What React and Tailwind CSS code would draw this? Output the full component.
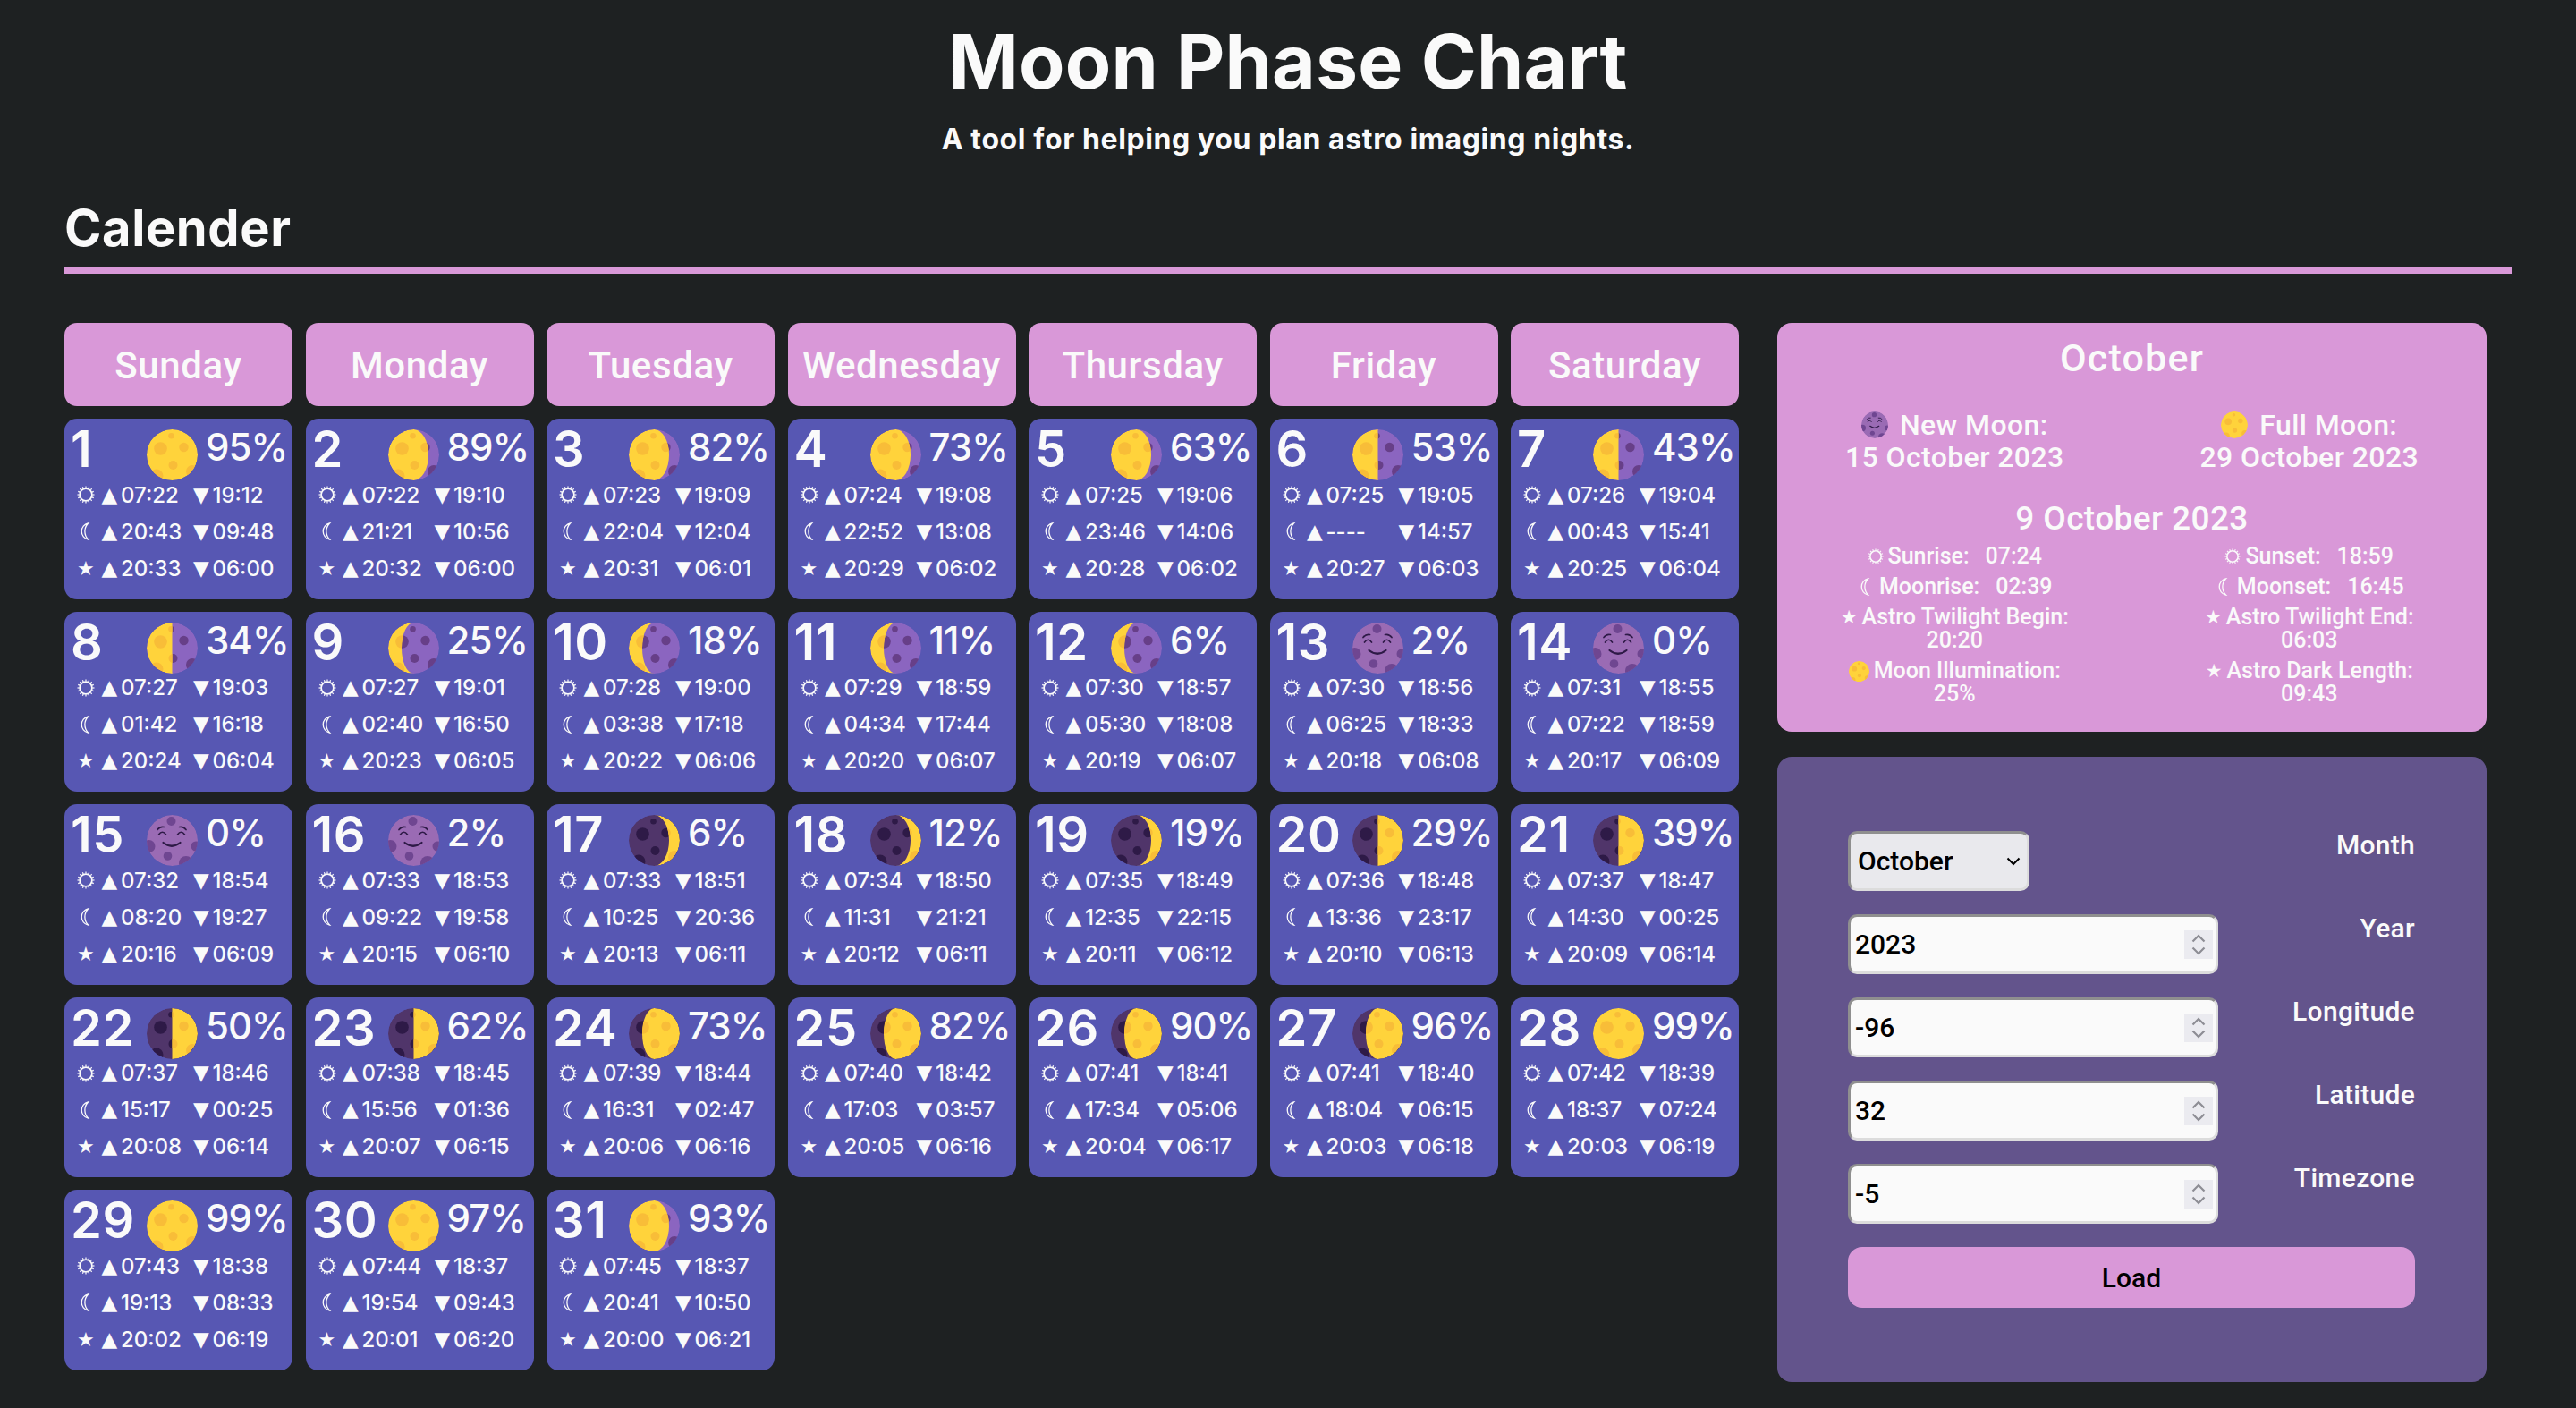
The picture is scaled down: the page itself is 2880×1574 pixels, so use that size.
import { useId } from "react";

const WEEKDAYS = ["Sunday", "Monday", "Tuesday", "Wednesday", "Thursday", "Friday", "Saturday"];

// day, illumination, phase, sun up/down, moon up/down, astro up/down
const DAYS = [
  [1, 95, "full", "07:22", "19:12", "20:43", "09:48", "20:33", "06:00"],
  [2, 89, "waningGibbous", "07:22", "19:10", "21:21", "10:56", "20:32", "06:00"],
  [3, 82, "waningGibbous", "07:23", "19:09", "22:04", "12:04", "20:31", "06:01"],
  [4, 73, "waningGibbous", "07:24", "19:08", "22:52", "13:08", "20:29", "06:02"],
  [5, 63, "waningGibbous", "07:25", "19:06", "23:46", "14:06", "20:28", "06:02"],
  [6, 53, "lastQuarter", "07:25", "19:05", "----", "14:57", "20:27", "06:03"],
  [7, 43, "lastQuarter", "07:26", "19:04", "00:43", "15:41", "20:25", "06:04"],
  [8, 34, "lastQuarter", "07:27", "19:03", "01:42", "16:18", "20:24", "06:04"],
  [9, 25, "waningCrescent", "07:27", "19:01", "02:40", "16:50", "20:23", "06:05"],
  [10, 18, "waningCrescent", "07:28", "19:00", "03:38", "17:18", "20:22", "06:06"],
  [11, 11, "waningCrescent", "07:29", "18:59", "04:34", "17:44", "20:20", "06:07"],
  [12, 6, "waningCrescent", "07:30", "18:57", "05:30", "18:08", "20:19", "06:07"],
  [13, 2, "new", "07:30", "18:56", "06:25", "18:33", "20:18", "06:08"],
  [14, 0, "new", "07:31", "18:55", "07:22", "18:59", "20:17", "06:09"],
  [15, 0, "new", "07:32", "18:54", "08:20", "19:27", "20:16", "06:09"],
  [16, 2, "new", "07:33", "18:53", "09:22", "19:58", "20:15", "06:10"],
  [17, 6, "waxingCrescent", "07:33", "18:51", "10:25", "20:36", "20:13", "06:11"],
  [18, 12, "waxingCrescent", "07:34", "18:50", "11:31", "21:21", "20:12", "06:11"],
  [19, 19, "waxingCrescent", "07:35", "18:49", "12:35", "22:15", "20:11", "06:12"],
  [20, 29, "firstQuarter", "07:36", "18:48", "13:36", "23:17", "20:10", "06:13"],
  [21, 39, "firstQuarter", "07:37", "18:47", "14:30", "00:25", "20:09", "06:14"],
  [22, 50, "firstQuarter", "07:37", "18:46", "15:17", "00:25", "20:08", "06:14"],
  [23, 62, "firstQuarter", "07:38", "18:45", "15:56", "01:36", "20:07", "06:15"],
  [24, 73, "waxingGibbous", "07:39", "18:44", "16:31", "02:47", "20:06", "06:16"],
  [25, 82, "waxingGibbous", "07:40", "18:42", "17:03", "03:57", "20:05", "06:16"],
  [26, 90, "waxingGibbous", "07:41", "18:41", "17:34", "05:06", "20:04", "06:17"],
  [27, 96, "waxingGibbous", "07:41", "18:40", "18:04", "06:15", "20:03", "06:18"],
  [28, 99, "full", "07:42", "18:39", "18:37", "07:24", "20:03", "06:19"],
  [29, 99, "full", "07:43", "18:38", "19:13", "08:33", "20:02", "06:19"],
  [30, 97, "full", "07:44", "18:37", "19:54", "09:43", "20:01", "06:20"],
  [31, 93, "waningGibbous", "07:45", "18:37", "20:41", "10:50", "20:00", "06:21"],
];

const LIT_SHAPES = {
  waningGibbous: "M28.5 0A28.5 28.5 0 0 0 28.5 57A16.5 28.5 0 0 0 28.5 0Z",
  lastQuarter: "M28.5 0A28.5 28.5 0 0 0 28.5 57Z",
  waningCrescent: "M28.5 0A28.5 28.5 0 0 0 28.5 57A13.5 28.5 0 0 1 28.5 0Z",
  waxingCrescent: "M28.5 0A28.5 28.5 0 0 1 28.5 57A16.5 28.5 0 0 0 28.5 0Z",
  firstQuarter: "M28.5 0A28.5 28.5 0 0 1 28.5 57Z",
  waxingGibbous: "M28.5 0A28.5 28.5 0 0 1 28.5 57A13.5 28.5 0 0 1 28.5 0Z",
};

const WANING = ["waningGibbous", "lastQuarter", "waningCrescent"];

function Craters({ fill }) {
  return (
    <g fill={fill}>
      <circle cx="27.5" cy="7.3" r="3.3" />
      <circle cx="15.5" cy="21.5" r="7.3" />
      <circle cx="41.5" cy="20" r="5.2" />
      <circle cx="29.5" cy="40" r="5" />
      <circle cx="11" cy="52" r="7.5" />
      <circle cx="51" cy="47" r="7" />
    </g>
  );
}

function Moon({ phase, size = 57 }) {
  const id = useId();

  if (phase === "new") {
    return (
      <svg viewBox="0 0 57 57" width={size} height={size} className="shrink-0">
        <clipPath id={id}>
          <circle cx="28.5" cy="28.5" r="28.5" />
        </clipPath>
        <g clipPath={`url(#${id})`}>
          <circle cx="28.5" cy="28.5" r="28.5" fill="#9a6bb4" />
          <g fill="#6f4691">
            <circle cx="27.5" cy="7" r="5" />
            <circle cx="2.5" cy="35" r="7" />
            <circle cx="55" cy="35" r="5.5" />
            <circle cx="23.5" cy="46" r="4.8" />
            <circle cx="44" cy="54" r="8" />
          </g>
          <g fill="none" stroke="#2e1a47" strokeWidth="1.7" strokeLinecap="round">
            <path d="M12 16.5Q15 12.5 19.5 13.5" />
            <path d="M44 16.5Q41 12.5 36.5 13.5" />
            <path d="M13.5 22Q17.5 16.5 21.5 22" />
            <path d="M34.5 22Q38.5 16.5 42.5 22" />
            <path d="M18.5 31Q28 38.5 37.5 31" strokeWidth="2.2" />
          </g>
        </g>
      </svg>
    );
  }

  if (phase === "full") {
    return (
      <svg viewBox="0 0 57 57" width={size} height={size} className="shrink-0">
        <clipPath id={id}>
          <circle cx="28.5" cy="28.5" r="28.5" />
        </clipPath>
        <g clipPath={`url(#${id})`}>
          <circle cx="28.5" cy="28.5" r="28.5" fill="#ffd33b" />
          <Craters fill="#f8bd38" />
        </g>
      </svg>
    );
  }

  const waning = WANING.includes(phase);
  return (
    <svg viewBox="0 0 57 57" width={size} height={size} className="shrink-0">
      <clipPath id={id}>
        <circle cx="28.5" cy="28.5" r="28.5" />
      </clipPath>
      <clipPath id={`${id}lit`}>
        <path d={LIT_SHAPES[phase]} />
      </clipPath>
      <g clipPath={`url(#${id})`}>
        <circle cx="28.5" cy="28.5" r="28.5" fill={waning ? "#8b65c0" : "#50356a"} />
        <Craters fill={waning ? "#673f88" : "#2e1a47"} />
        <g clipPath={`url(#${id}lit)`}>
          <circle cx="28.5" cy="28.5" r="28.5" fill="#ffd33b" />
          <Craters fill="#f8bd38" />
        </g>
      </g>
    </svg>
  );
}

function SunIcon({ size = 20 }) {
  const rays = Array.from({ length: 16 }, (_, i) => i * 22.5);
  return (
    <svg viewBox="0 0 20 20" width={size} height={size} className="shrink-0">
      <circle cx="10" cy="10" r="6.9" fill="none" stroke="#fafafa" strokeWidth="1.8" />
      {rays.map((angle) => (
        <rect key={angle} x="9.4" y="0.5" width="1.2" height="2" fill="#fafafa" transform={`rotate(${angle} 10 10)`} />
      ))}
    </svg>
  );
}

function CrescentIcon({ size = 20 }) {
  return (
    <svg viewBox="0 0 20 20" width={size} height={size} className="shrink-0">
      <path d="M12.5 1A9.2 9.2 0 0 0 12.5 19A13 13 0 0 1 12.5 1Z" fill="none" stroke="#fafafa" strokeWidth="1.3" />
    </svg>
  );
}

function TimeRow({ icon, up, down }) {
  return (
    <div className="grid grid-cols-[27.5px_21.5px_81px_21.5px_auto] items-center h-[41px] pl-[14px] text-[24px] leading-[41px] font-medium">
      <span className="flex items-center">{icon}</span>
      <span className="font-['DejaVu_Sans'] text-[23px]">▲</span>
      <span>{up}</span>
      <span className="font-['DejaVu_Sans'] text-[23px]">▼</span>
      <span>{down}</span>
    </div>
  );
}

function DayCard({ data }) {
  const [day, percent, phase, sunUp, sunDown, moonUp, moonDown, astroUp, astroDown] = data;
  return (
    <div className="h-[201.5px] rounded-[14px] bg-[#5757b3] text-[#fafafa] font-['Inter',sans-serif]">
      <div className="grid grid-cols-[85px_57px_auto] items-start h-[64.5px] pt-3 pl-[7px]">
        <span className="text-[56px] leading-[44px] font-semibold tracking-[0.5px]">{day}</span>
        <Moon phase={phase} />
        <span className="ml-[9px] text-[42px] leading-[39px] font-medium tracking-[-1px]">{percent}%</span>
      </div>
      <TimeRow icon={<SunIcon />} up={sunUp} down={sunDown} />
      <TimeRow icon={<CrescentIcon />} up={moonUp} down={moonDown} />
      <TimeRow icon={<span className="font-['DejaVu_Sans'] text-[22px]">★</span>} up={astroUp} down={astroDown} />
    </div>
  );
}

function Calendar() {
  return (
    <div className="grid grid-cols-[repeat(7,255px)] gap-x-[14.5px] gap-y-[14px] content-start">
      {WEEKDAYS.map((name) => (
        <div
          key={name}
          className="flex h-[93px] items-center justify-center rounded-[14px] bg-[#d998d8] pt-[2px] text-[42px] font-medium tracking-[0.6px] text-[#fafafa] font-['Roboto',sans-serif]"
        >
          {name}
        </div>
      ))}
      {DAYS.map((data) => (
        <DayCard key={data[0]} data={data} />
      ))}
    </div>
  );
}

function Detail({ icon, label, value, stacked }) {
  return (
    <div className="text-center">
      <span className="inline-flex items-center justify-center gap-[5px] align-top">
        {icon}
        <span>{label}</span>
      </span>
      {stacked ? <div>{value}</div> : <span className="ml-[18px]">{value}</span>}
    </div>
  );
}

function MonthPanel() {
  return (
    <div className="h-[457px] rounded-[16px] bg-[#d998d8] pt-[14px] text-center text-[#fafafa] font-['Roboto',sans-serif] font-medium">
      <h3 className="text-[43px] leading-[50px] tracking-[1.2px]">October</h3>
      <div className="mt-[32px] grid grid-cols-2 text-[32px] leading-[36px] tracking-[0.4px]">
        <div>
          <div className="flex items-center justify-center gap-[13px]">
            <Moon phase="new" size={30} />
            New Moon:
          </div>
          <div>15 October 2023</div>
        </div>
        <div>
          <div className="flex items-center justify-center gap-[13px]">
            <Moon phase="full" size={30} />
            Full Moon:
          </div>
          <div>29 October 2023</div>
        </div>
      </div>
      <h3 className="mt-[29px] text-[37px] leading-[44px] tracking-[0.4px]">9 October 2023</h3>
      <div className="mt-[7px] grid grid-cols-2 gap-y-2 text-[25px] leading-[26px]">
        <Detail icon={<SunIcon size={18} />} label="Sunrise:" value="07:24" />
        <Detail icon={<SunIcon size={18} />} label="Sunset:" value="18:59" />
        <Detail icon={<CrescentIcon size={20} />} label="Moonrise:" value="02:39" />
        <Detail icon={<CrescentIcon size={20} />} label="Moonset:" value="16:45" />
        <Detail icon={<span className="font-['DejaVu_Sans'] text-[21px]">★</span>} label="Astro Twilight Begin:" value="20:20" stacked />
        <Detail icon={<span className="font-['DejaVu_Sans'] text-[21px]">★</span>} label="Astro Twilight End:" value="06:03" stacked />
        <Detail icon={<Moon phase="full" size={23} />} label="Moon Illumination:" value="25%" stacked />
        <Detail icon={<span className="font-['DejaVu_Sans'] text-[21px]">★</span>} label="Astro Dark Length:" value="09:43" stacked />
      </div>
    </div>
  );
}

function NumberField({ label, value }) {
  return (
    <div className="flex h-[67px] justify-between">
      <div className="relative w-[414px]">
        <input
          type="text"
          defaultValue={value}
          aria-label={label}
          className="h-full w-full rounded-[10px] border-[3px] border-t-[#8f8f8f] border-l-[#8f8f8f] border-r-[#dcdcdc] border-b-[#dcdcdc] bg-[#fafafa] pl-[5px] text-[30px] font-medium text-black outline-none"
        />
        <svg
          viewBox="0 0 32 32"
          width="32"
          height="32"
          className="absolute right-[6px] top-[18px] bg-[#ebebf0]"
        >
          <path d="M9.5 12.5L16 6L22.5 12.5M9.5 19.5L16 26L22.5 19.5" fill="none" stroke="#8d8d94" strokeWidth="2.2" />
        </svg>
      </div>
      <label className="text-[30px] leading-[32px] font-medium tracking-[0.3px] text-[#fafafa]">{label}</label>
    </div>
  );
}

function LoadForm() {
  return (
    <form className="flex flex-col gap-[26px] rounded-[16px] bg-[#63548c] pt-[83px] pb-[83px] pl-[79px] pr-[80px] font-['Roboto',sans-serif]">
      <div className="flex h-[67px] justify-between">
        <div className="relative w-[203px]">
          <select
            defaultValue="October"
            aria-label="Month"
            className="h-full w-full appearance-none rounded-[10px] border-[3px] border-t-[#8f8f8f] border-l-[#8f8f8f] border-r-[#dcdcdc] border-b-[#dcdcdc] bg-[#e9e9ed] pl-[8px] text-[30px] font-medium text-black outline-none"
          >
            <option>September</option>
            <option>October</option>
            <option>November</option>
          </select>
          <svg viewBox="0 0 16 10" width="16" height="10" className="absolute right-[10px] top-[29px]">
            <path d="M1.5 1.5L8 8L14.5 1.5" fill="none" stroke="#000" strokeWidth="2" />
          </svg>
        </div>
        <label className="text-[30px] leading-[32px] font-medium tracking-[0.3px] text-[#fafafa]">Month</label>
      </div>
      <NumberField label="Year" value="2023" />
      <NumberField label="Longitude" value="-96" />
      <NumberField label="Latitude" value="32" />
      <NumberField label="Timezone" value="-5" />
      <button type="button" className="h-[68px] rounded-[16px] bg-[#d998d8] text-[30px] font-medium text-black">
        Load
      </button>
    </form>
  );
}

export default function App() {
  return (
    <div className="min-h-screen bg-[#1e2122] text-[#fafafa] font-['Inter',sans-serif]">
      <header className="pt-[27px] text-center">
        <h1 className="text-[84px] leading-[84px] font-bold tracking-[0.2px]">Moon Phase Chart</h1>
        <p className="mt-[25px] text-[32px] leading-[40px] font-bold tracking-[0.6px]">A tool for helping you plan astro imaging nights.</p>
      </header>
      <main className="mx-[72px] mt-[49px]">
        <h2 className="text-[56px] leading-[60px] font-bold tracking-[0.6px]">Calender</h2>
        <div className="mt-[13px] h-[8px] bg-[#d998d8]" />
        <div className="mt-[55px] flex items-start">
          <Calendar />
          <aside className="ml-[43px] flex w-[793px] flex-col gap-[28px]">
            <MonthPanel />
            <LoadForm />
          </aside>
        </div>
      </main>
    </div>
  );
}
